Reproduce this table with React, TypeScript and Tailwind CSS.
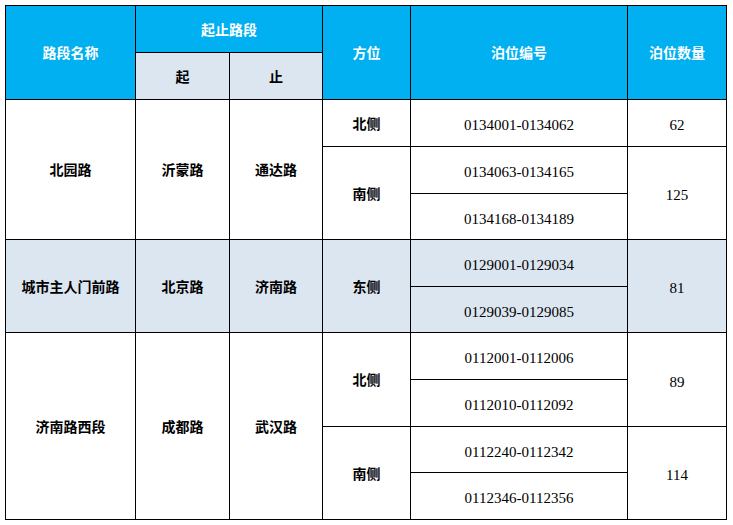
const cjk = "font-['Noto_Sans_CJK_SC',sans-serif] font-bold text-[14px]";
const num = "font-['Liberation_Serif',serif] text-[15px] pt-[5px]";

const cell = "border border-black text-center align-middle p-0";

export default function App() {
  return (
    <div className="bg-white w-[733px] h-[525px] pt-[5px] pl-[5px]">
      <table className="w-[721px] table-fixed border-collapse text-black">
        <colgroup>
          <col className="w-[130px]" />
          <col className="w-[94px]" />
          <col className="w-[93px]" />
          <col className="w-[88px]" />
          <col className="w-[217px]" />
          <col className="w-[99px]" />
        </colgroup>
        <thead>
          <tr className="h-[47px]">
            <th rowSpan={2} className={`${cell} ${cjk} bg-[#00b0f0] text-white`}>路段名称</th>
            <th colSpan={2} className={`${cell} ${cjk} bg-[#00b0f0] text-white`}>起止路段</th>
            <th rowSpan={2} className={`${cell} ${cjk} bg-[#00b0f0] text-white`}>方位</th>
            <th rowSpan={2} className={`${cell} ${cjk} bg-[#00b0f0] text-white`}>泊位编号</th>
            <th rowSpan={2} className={`${cell} ${cjk} bg-[#00b0f0] text-white`}>泊位数量</th>
          </tr>
          <tr className="h-[47px]">
            <th className={`${cell} ${cjk} bg-[#dce6f1]`}>起</th>
            <th className={`${cell} ${cjk} bg-[#dce6f1]`}>止</th>
          </tr>
        </thead>
        <tbody>
          {/* 北园路 */}
          <tr className="h-[47px]">
            <td rowSpan={3} className={`${cell} ${cjk}`}>北园路</td>
            <td rowSpan={3} className={`${cell} ${cjk}`}>沂蒙路</td>
            <td rowSpan={3} className={`${cell} ${cjk}`}>通达路</td>
            <td className={`${cell} ${cjk}`}>北侧</td>
            <td className={`${cell} ${num}`}>0134001-0134062</td>
            <td className={`${cell} ${num}`}>62</td>
          </tr>
          <tr className="h-[47px]">
            <td rowSpan={2} className={`${cell} ${cjk}`}>南侧</td>
            <td className={`${cell} ${num}`}>0134063-0134165</td>
            <td rowSpan={2} className={`${cell} ${num}`}>125</td>
          </tr>
          <tr className="h-[46px]">
            <td className={`${cell} ${num}`}>0134168-0134189</td>
          </tr>

          {/* 城市主人门前路 */}
          <tr className="h-[47px] bg-[#dce6f1]">
            <td rowSpan={2} className={`${cell} ${cjk}`}>城市主人门前路</td>
            <td rowSpan={2} className={`${cell} ${cjk}`}>北京路</td>
            <td rowSpan={2} className={`${cell} ${cjk}`}>济南路</td>
            <td rowSpan={2} className={`${cell} ${cjk}`}>东侧</td>
            <td className={`${cell} ${num}`}>0129001-0129034</td>
            <td rowSpan={2} className={`${cell} ${num}`}>81</td>
          </tr>
          <tr className="h-[46px] bg-[#dce6f1]">
            <td className={`${cell} ${num}`}>0129039-0129085</td>
          </tr>

          {/* 济南路西段 */}
          <tr className="h-[47px]">
            <td rowSpan={4} className={`${cell} ${cjk}`}>济南路西段</td>
            <td rowSpan={4} className={`${cell} ${cjk}`}>成都路</td>
            <td rowSpan={4} className={`${cell} ${cjk}`}>武汉路</td>
            <td rowSpan={2} className={`${cell} ${cjk}`}>北侧</td>
            <td className={`${cell} ${num}`}>0112001-0112006</td>
            <td rowSpan={2} className={`${cell} ${num}`}>89</td>
          </tr>
          <tr className="h-[47px]">
            <td className={`${cell} ${num}`}>0112010-0112092</td>
          </tr>
          <tr className="h-[46px]">
            <td rowSpan={2} className={`${cell} ${cjk}`}>南侧</td>
            <td className={`${cell} ${num}`}>0112240-0112342</td>
            <td rowSpan={2} className={`${cell} ${num}`}>114</td>
          </tr>
          <tr className="h-[47px]">
            <td className={`${cell} ${num}`}>0112346-0112356</td>
          </tr>
        </tbody>
      </table>
    </div>
  );
}
